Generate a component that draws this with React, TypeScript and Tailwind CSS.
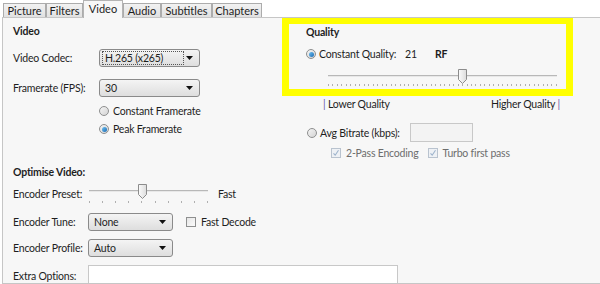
import React from "react";

const Radio = ({ checked }: { checked?: boolean }) => (
  <div className="w-[10px] h-[10px] rounded-full border border-[#8e8f8f] bg-gradient-to-br from-[#f4f4f4] to-[#d4d4d4] flex items-center justify-center shrink-0">
    {checked && <div className="w-[5px] h-[5px] rounded-full bg-gradient-to-br from-[#6ec1f0] to-[#1b6bb4]" />}
  </div>
);

const Check = ({ checked, disabled }: { checked?: boolean; disabled?: boolean }) => (
  <div
    className={
      "w-[10px] h-[10px] border flex items-center justify-center shrink-0 " +
      (disabled ? "border-[#b9c3cf] bg-[#eef1f5]" : "border-[#8e8f8f] bg-gradient-to-br from-[#e6e6e6] to-[#fbfbfb]")
    }
  >
    {checked && (
      <svg width="8" height="8" viewBox="0 0 8 8">
        <path d="M1.5 4.3 L3.2 6.2 L6.5 1.2" stroke="#9db3cc" strokeWidth="1.1" fill="none" />
      </svg>
    )}
  </div>
);

const Arrow = () => (
  <svg width="7" height="4" viewBox="0 0 7 4" className="shrink-0">
    <path d="M0 0 H7 L3.5 4 Z" fill="#111" />
  </svg>
);

const Select = ({ value, w, focus }: { value: string; w: string; focus?: boolean }) => (
  <div
    className={
      w +
      " h-[18px] rounded-[3px] border border-[#8a8a8a] bg-gradient-to-b from-[#f4f4f4] to-[#dedede] flex items-center pl-[2px] pr-[6px] justify-between"
    }
  >
    {focus ? (
      <div className="border border-dotted border-[#555] h-[14px] w-[82px] flex items-center pl-[2px]">{value}</div>
    ) : (
      <div className="pl-[3px]">{value}</div>
    )}
    <Arrow />
  </div>
);

const Thumb = () => (
  <svg width="9" height="15" viewBox="0 0 9 15">
    <defs>
      <linearGradient id="tg" x1="0" y1="0" x2="1" y2="0">
        <stop offset="0" stopColor="#fbfbfb" />
        <stop offset="1" stopColor="#dcdcdc" />
      </linearGradient>
    </defs>
    <path d="M0.5 0.5 H8.5 V10.5 L4.5 14.5 L0.5 10.5 Z" fill="url(#tg)" stroke="#8c8c8c" />
  </svg>
);

const Tab = ({ label, w, active }: { label: string; w: string; active?: boolean }) =>
  active ? (
    <div className={w + " h-[18px] -mb-px relative z-10 bg-[#f7f7f7] border-l border-r border-t border-[#b4b4b4] flex items-center justify-center pb-[1px]"}>
      {label}
    </div>
  ) : (
    <div className={w + " h-[14px] bg-gradient-to-b from-[#f2f2f2] to-[#e1e1e1] border-l border-t border-r border-[#acacac] flex items-center justify-center"}>
      {label}
    </div>
  );

export default function App() {
  const qTicks = Array.from({ length: 52 });
  const pTicks = Array.from({ length: 10 });
  return (
    <div className="w-[600px] h-[284px] bg-white overflow-hidden whitespace-nowrap text-[10.5px] tracking-[-0.2px] leading-[14px] text-[#1e1e1e] font-['Lato',sans-serif]">
      <div className="flex h-[17px] items-end pl-[3px] text-[11px] tracking-normal">
        <Tab label="Picture" w="w-[43px]" />
        <Tab label="Filters" w="w-[37px]" />
        <Tab label="Video" w="w-[40px]" active />
        <Tab label="Audio" w="w-[38px]" />
        <Tab label="Subtitles" w="w-[51px]" />
        <Tab label="Chapters" w="w-[50px]" />
      </div>
      <div className="ml-[2px] h-[267px] border-l border-t border-b border-[#c6c6c6] bg-[#f7f7f7] flex flex-col overflow-hidden">
        <div className="flex h-[142px] shrink-0">
          {/* left top */}
          <div className="w-[279px] pl-[10px] pt-[6px]">
            <div className="h-[14px] font-bold">Video</div>
            <div className="mt-[11px] h-[18px] flex items-center">
              <div className="w-[86px]">Video Codec:</div>
              <Select value="H.265 (x265)" w="w-[101px]" focus />
            </div>
            <div className="mt-[12px] h-[18px] flex items-center">
              <div className="w-[86px]">Framerate (FPS):</div>
              <Select value="30" w="w-[101px]" />
            </div>
            <div className="mt-[7px] h-[14px] flex items-center pl-[86px] gap-[4px]">
              <Radio />
              <span>Constant Framerate</span>
            </div>
            <div className="mt-[4px] h-[14px] flex items-center pl-[86px] gap-[4px]">
              <Radio checked />
              <span>Peak Framerate</span>
            </div>
          </div>
          {/* right top */}
          <div className="flex flex-col">
            <div className="-mt-px w-[291px] h-[79px] border-[7px] border-[#ffff00] pl-[17px] pt-[1px]">
              <div className="h-[14px] font-bold">Quality</div>
              <div className="mt-[8px] h-[14px] flex items-center">
                <Radio checked />
                <span className="ml-[3px] w-[86px]">Constant Quality:</span>
                <span className="w-[30px]">21</span>
                <span className="font-bold">RF</span>
              </div>
              <div className="mt-[6px] ml-[22px] w-[229px] h-[21px] flex flex-col relative">
                <div className="mt-[8px] h-[2px] border-t border-[#b8b8b8] bg-[#e8e8e8]" />
                <div className="mt-[7px] flex justify-between">
                  {qTicks.map((_, i) => (
                    <span key={i} className="w-px h-[2px] bg-[#b0b0b0]" />
                  ))}
                </div>
                <div className="absolute left-[130px] top-[2px]">
                  <Thumb />
                </div>
              </div>
            </div>
            <div className="mt-[1px] h-[14px] ml-[41px] w-[237px] flex justify-between">
              <span>
                <span className="text-[#6a5aa8]">|</span> Lower Quality
              </span>
              <span>
                Higher Quality <span className="text-[#6a5aa8]">|</span>
              </span>
            </div>
            <div className="mt-[12px] h-[19px] ml-[25px] flex items-center">
              <Radio />
              <span className="ml-[3px] w-[90px]">Avg Bitrate (kbps):</span>
              <div className="w-[63px] h-[19px] border border-[#c8c8c8] bg-[#f3f3f3]" />
            </div>
            <div className="mt-[4px] h-[14px] ml-[49px] flex items-center text-[#6d6d6d]">
              <Check checked disabled />
              <span className="ml-[5px]">2-Pass Encoding</span>
              <span className="ml-[9px]">
                <Check checked disabled />
              </span>
              <span className="ml-[5px]">Turbo first pass</span>
            </div>
          </div>
        </div>
        {/* bottom */}
        <div className="pl-[10px]">
          <div className="mt-[5px] h-[14px] font-bold">Optimise Video:</div>
          <div className="mt-[4px] h-[21px] flex items-center">
            <div className="w-[76px]">Encoder Preset:</div>
            <div className="w-[119px] h-[21px] relative flex flex-col">
              <div className="mt-[7px] h-[2px] border-t border-[#b8b8b8] bg-[#e8e8e8]" />
              <div className="mt-[9px] flex justify-between">
                {pTicks.map((_, i) => (
                  <span key={i} className="w-px h-[2px] bg-[#b0b0b0]" />
                ))}
              </div>
              <div className="absolute left-[49px] top-[1px]">
                <Thumb />
              </div>
            </div>
            <span className="ml-[10px]">Fast</span>
          </div>
          <div className="mt-[9px] h-[18px] flex items-center">
            <div className="w-[75px]">Encoder Tune:</div>
            <Select value="None" w="w-[85px]" />
            <div className="ml-[13px]">
              <Check />
            </div>
            <span className="ml-[5px]">Fast Decode</span>
          </div>
          <div className="mt-[8px] h-[18px] flex items-center">
            <div className="w-[75px]">Encoder Profile:</div>
            <Select value="Auto" w="w-[85px]" />
          </div>
          <div className="mt-[8px] h-[24px] flex items-start">
            <div className="w-[75px] pt-[4px]">Extra Options:</div>
            <div className="w-[310px] h-[24px] border border-[#c8c8c8] bg-white" />
          </div>
        </div>
      </div>
    </div>
  );
}
